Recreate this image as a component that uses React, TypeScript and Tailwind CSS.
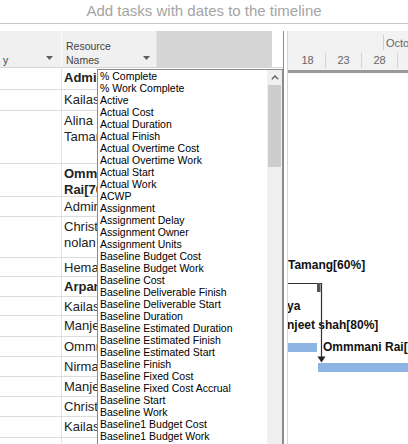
import React from "react"

const fields = [
  "% Complete",
  "% Work Complete",
  "Active",
  "Actual Cost",
  "Actual Duration",
  "Actual Finish",
  "Actual Overtime Cost",
  "Actual Overtime Work",
  "Actual Start",
  "Actual Work",
  "ACWP",
  "Assignment",
  "Assignment Delay",
  "Assignment Owner",
  "Assignment Units",
  "Baseline Budget Cost",
  "Baseline Budget Work",
  "Baseline Cost",
  "Baseline Deliverable Finish",
  "Baseline Deliverable Start",
  "Baseline Duration",
  "Baseline Estimated Duration",
  "Baseline Estimated Finish",
  "Baseline Estimated Start",
  "Baseline Finish",
  "Baseline Fixed Cost",
  "Baseline Fixed Cost Accrual",
  "Baseline Start",
  "Baseline Work",
  "Baseline1 Budget Cost",
  "Baseline1 Budget Work",
  "Baseline1 Cost",
]

const rows = [
  { lines: ["Administrator"], bold: true, h: 22 },
  { lines: ["Kailash"], bold: false, h: 21 },
  { lines: ["Alina", "Tamang[60%]"], bold: false, h: 53 },
  { lines: ["Ommmani", "Rai[70%]"], bold: true, h: 33 },
  { lines: ["Admin"], bold: false, h: 20 },
  { lines: ["Christopher", "nolan"], bold: false, h: 41 },
  { lines: ["Hemant"], bold: false, h: 19 },
  { lines: ["Arpan"], bold: true, h: 20 },
  { lines: ["Kailash"], bold: false, h: 19 },
  { lines: ["Manjeet shah"], bold: false, h: 21 },
  { lines: ["Ommmani Rai"], bold: false, h: 20 },
  { lines: ["Nirmala"], bold: false, h: 20 },
  { lines: ["Manjeet shah"], bold: false, h: 20 },
  { lines: ["Christopher"], bold: false, h: 20 },
  { lines: ["Kailash"], bold: false, h: 21 },
  { lines: [], bold: false, h: 20 },
]

const days = ["18", "23", "28", "2"]

function Caret() {
  return (
    <svg width="7" height="4" viewBox="0 0 7 4" className="mb-[7px] shrink-0">
      <path d="M0 0h7L3.5 4z" fill="#5f5f5f" />
    </svg>
  )
}

export default function App() {
  return (
    <div className="relative w-[408px] h-[444px] overflow-hidden bg-white font-['Liberation_Sans',Arial,sans-serif]">
      <div className="h-[24px] border-b border-[#c8c8c8] flex items-center justify-center pb-[2px] text-[15px] leading-none text-[#a4a4a4]">
        Add tasks with dates to the timeline
      </div>

      <div className="flex h-[420px] pt-[7px]">
        {/* sheet */}
        <div className="w-[283px] flex flex-col">
          <div className="h-[37px] flex shrink-0 border-b border-[#d4d4d4] text-[10.5px] leading-[14px] text-[#444]">
            <div className="w-[62px] bg-[#f0f0f0] border-r border-[#fafafa] flex items-end justify-between pl-[3px] pr-[8px]">
              <span>y</span>
              <Caret />
            </div>
            <div className="w-[95px] bg-[#f0f0f0] border-r border-[#e2e2e2] flex items-end justify-between pl-[4px] pr-[6px]">
              <span>
                Resource
                <br />
                Names
              </span>
              <Caret />
            </div>
            <div className="flex-1 bg-[#d5d5d5]" />
            <div className="w-[11px] bg-white" />
          </div>
          <div className="flex-1 overflow-hidden">
            {rows.map((r, i) => (
              <div key={i} className="flex border-b border-[#dcdcdc]" style={{ height: r.h }}>
                <div className="w-[62px] border-r border-[#e4e4e4]" />
                <div
                  className={`w-[95px] pl-[2px] pt-[2px] text-[13px] leading-[16px] text-[#222] ${r.bold ? "font-bold" : ""}`}
                >
                  {r.lines.map((l) => (
                    <div key={l} className="whitespace-nowrap overflow-hidden">
                      {l}
                    </div>
                  ))}
                </div>
                <div className="flex-1" />
              </div>
            ))}
          </div>
        </div>

        <div className="w-px bg-[#8d8d8d]" />
        <div className="w-[3px]" />

        {/* timeline */}
        <div className="flex-1 flex flex-col border-l border-[#d6d6d6] overflow-hidden">
          <div className="h-[39px] shrink-0 bg-[#f2f2f2] flex flex-col text-[11px] text-[#666]">
            <div className="h-[19px] flex items-end">
              <div className="w-[96px] h-[15px] shrink-0 border-r border-[#cfcfcf]" />
              <span className="pl-[2px] leading-[14px] whitespace-nowrap">October 2017</span>
            </div>
            <div className="flex-1 flex items-center pl-[2px]">
              {days.map((d) => (
                <div
                  key={d}
                  className="w-[36px] shrink-0 h-[15px] border-r border-[#d3d3d3] flex items-center justify-center"
                >
                  {d}
                </div>
              ))}
            </div>
          </div>
          <div className="h-[3px] shrink-0 bg-[#9a9a9a]" />
          <div className="relative flex-1 text-[12px] leading-[14px] font-bold text-[#111]">
            <span className="absolute left-0 top-[185px] whitespace-nowrap">Tamang[60%]</span>
            <span className="absolute -left-[1px] top-[226px] whitespace-nowrap">ya</span>
            <span className="absolute -left-[1px] top-[245px] whitespace-nowrap">njeet shah[80%]</span>
            <div className="absolute left-0 top-[270px] w-[29px] h-[9px] bg-[#8db4e2]" />
            <span className="absolute left-[35px] top-[267px] whitespace-nowrap">Ommmani Rai[70%]</span>
            <div className="absolute left-[30px] top-[290px] w-[100px] h-[9px] bg-[#8db4e2]" />
            <svg className="absolute left-0 top-[205px]" width="45" height="90" viewBox="0 0 45 90">
              <path d="M0 5.5H33.5V80" stroke="#333" strokeWidth="1.2" fill="none" />
              <rect x="29" y="5" width="3.5" height="9" fill="#555" />
              <path d="M29.5 78.5h8l-4 6z" fill="#222" />
            </svg>
          </div>
        </div>
      </div>

      {/* field dropdown */}
      <div className="absolute left-[97px] top-[69px] w-[186px] h-[390px] bg-white border border-[#8a8a8a] flex">
        <div className="flex-1 pl-[2px] text-[10.5px] leading-[12px] text-black overflow-hidden">
          {fields.map((f) => (
            <div key={f} className="whitespace-nowrap">
              {f}
            </div>
          ))}
        </div>
        <div className="w-[15px] bg-[#f0f0f0] flex flex-col items-center">
          <div className="h-[15px] flex items-center justify-center">
            <svg width="8" height="5" viewBox="0 0 8 5">
              <path d="M0.8 4.2L4 1L7.2 4.2" stroke="#606060" strokeWidth="1.4" fill="none" />
            </svg>
          </div>
          <div className="w-[13px] h-[82px] bg-[#cdcdcd]" />
        </div>
      </div>
    </div>
  )
}
